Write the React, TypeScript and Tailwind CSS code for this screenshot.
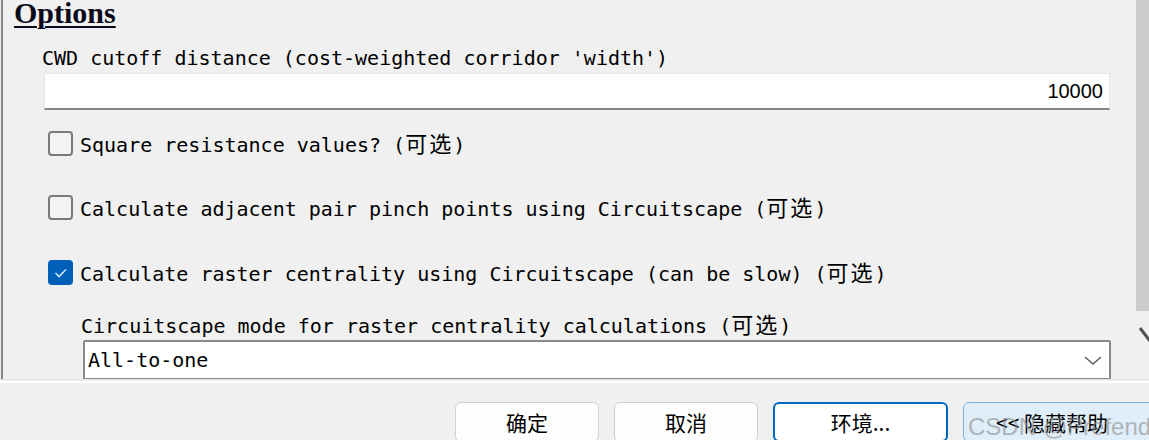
const mono = { fontFamily: '"DejaVu Sans Mono", "Noto Sans CJK SC", monospace' };

function Cjk({ children }: { children: string }) {
  return <span className="text-[22px] tracking-[2px]" style={{ fontFamily: '"Noto Sans CJK SC", sans-serif' }}>{children}</span>;
}

function CheckRow({ label, checked, className }: { label: string; checked?: boolean; className?: string }) {
  return (
    <div className={`flex items-center h-[25px] ml-[45px] ${className ?? ""}`}>
      {checked ? (
        <div className="w-[25px] h-[25px] rounded-[4px] bg-[#005fb8] flex items-center justify-center">
          <svg width="25" height="25" viewBox="0 0 25 25">
            <path d="M7.5 13 L11 16.5 L18 9.5" fill="none" stroke="#cfe3f5" strokeWidth="1.6" />
          </svg>
        </div>
      ) : (
        <div className="w-[25px] h-[25px] rounded-[4px] border-2 border-[#7a7a7a] bg-[#f3f3f3]" />
      )}
      <span className="ml-[7px] text-[20px] leading-[25px] text-black whitespace-nowrap">
        {label} (<Cjk>可选</Cjk>)
      </span>
    </div>
  );
}

export default function App() {
  return (
    <div className="relative w-[1149px] h-[440px] bg-[#f0f0f0] overflow-hidden" style={mono}>
      <div className="flex h-[379px]">
        <div className="flex-1 ml-px border-l-2 border-[#858585] overflow-hidden">
          <div
            className="-mt-[2px] ml-[11px] h-[30px] text-[30px] leading-[30px] font-bold text-[#0a0a1a] underline decoration-2 underline-offset-[3px]"
            style={{ fontFamily: '"Liberation Serif", serif' }}
          >
            Options
          </div>
          <div className="mt-[20px] ml-[39px] text-[20px] leading-[20px] text-black whitespace-nowrap">
            CWD cutoff distance (cost-weighted corridor 'width')
          </div>
          <div
            className="mt-[5px] ml-[41px] w-[1066px] h-[37px] bg-white border border-[#e6e6e6] border-b-2 border-b-[#868686] flex items-center justify-end pr-[6px] text-[20px] text-black"
            style={{ fontFamily: '"Liberation Sans", sans-serif' }}
          >
            10000
          </div>
          <CheckRow className="mt-[21px]" label="Square resistance values?" />
          <CheckRow className="mt-[39px]" label="Calculate adjacent pair pinch points using Circuitscape" />
          <CheckRow className="mt-[40px]" checked label="Calculate raster centrality using Circuitscape (can be slow)" />
          <div className="mt-[28px] ml-[78px] text-[20px] leading-[20px] text-black whitespace-nowrap">
            Circuitscape mode for raster centrality calculations (<Cjk>可选</Cjk>)
          </div>
          <div className="mt-[4px] ml-[80px] w-[1028px] h-[40px] bg-white border-2 border-[#8a8a8a] rounded-[2px] flex items-center justify-between pl-[3px] pr-[6px]">
            <span className="text-[20px] leading-[20px] text-black">All-to-one</span>
            <svg width="20" height="12" viewBox="0 0 20 12">
              <path d="M2 3 L10 10 L18 3" fill="none" stroke="#606060" strokeWidth="1.5" />
            </svg>
          </div>
        </div>
        <div className="w-[13px] flex flex-col">
          <div className="h-[311px] bg-[#cdcdcd]" />
          <svg width="13" height="40" viewBox="0 0 13 40">
            <path d="M4 17 L14 30" stroke="#505050" strokeWidth="3" />
          </svg>
        </div>
      </div>
      <div className="h-px bg-[#e2e2e2]" />
      <div className="h-[2px] mt-px bg-white" />
      <div
        className="flex gap-[15px] pl-[455px] mt-[19px] text-[21px] text-black whitespace-nowrap"
        style={{ fontFamily: '"Noto Sans CJK SC", sans-serif' }}
      >
        <button className="w-[144px] h-[40px] shrink-0 rounded-[6px] border border-[#d0d0d0] bg-[#fdfdfd] leading-none">确定</button>
        <button className="w-[144px] h-[40px] shrink-0 rounded-[6px] border border-[#d0d0d0] bg-[#fdfdfd] leading-none">取消</button>
        <button className="w-[175px] h-[40px] shrink-0 rounded-[6px] border-2 border-[#0067c0] bg-white leading-none">环境...</button>
        <button className="w-[200px] h-[40px] shrink-0 rounded-[6px] border border-[#7fb4e0] bg-[#e0eef9] leading-none text-left pl-[32px]">
          &lt;&lt; 隐藏帮助
        </button>
      </div>
      <div
        className="absolute left-[968px] top-[409px] text-[24px] text-[#8c8c8c] opacity-60 whitespace-nowrap"
        style={{ fontFamily: '"Liberation Sans", sans-serif' }}
      >
        CSDN @Prefendd
      </div>
    </div>
  );
}
